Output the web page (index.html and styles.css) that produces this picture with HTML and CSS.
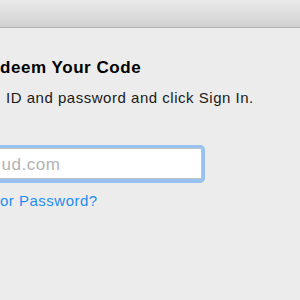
FILE: index.html
```html
<!DOCTYPE html>
<html>
<head>
<meta charset="utf-8">
<link rel="stylesheet" href="styles.css">
</head>
<body>
<div class="toolbar"></div>
<main class="content">
  <h1 class="title">deem Your Code</h1>
  <p class="subtitle">ID and password and click Sign In.</p>
  <div class="ring">
    <input class="field" type="text" placeholder="ud.com">
  </div>
  <a class="link" href="#">or Password?</a>
</main>
</body>
</html>
```
FILE: styles.css
```css
html, body {
  margin: 0;
  padding: 0;
  width: 300px;
  height: 300px;
  overflow: hidden;
  background: #ececec;
  font-family: "Liberation Sans", Arial, sans-serif;
}
.toolbar {
  height: 28px;
  box-sizing: border-box;
  background: linear-gradient(#e9e9e9, #d2d2d2);
  border-bottom: 1px solid #b1b1b1;
}
.content {
  display: flex;
  flex-direction: column;
  align-items: flex-start;
}
.title {
  margin: 30px 0 0 0;
  font-size: 17px;
  line-height: 20px;
  font-weight: bold;
  letter-spacing: 0.55px;
  color: #000;
}
.subtitle {
  margin: 10.5px 0 0 6px;
  font-size: 15px;
  line-height: 18px;
  letter-spacing: 0.52px;
  color: #1a1a1a;
}
.ring {
  margin: 38px 0 0 -10px;
  padding: 3.5px;
  border-radius: 5px;
  background: #96c1f0;
  display: flex;
}
.field {
  box-sizing: border-box;
  width: 208px;
  height: 31px;
  margin: 0;
  padding: 3px 0 0 7px;
  border: 1px solid #c2c2c2;
  border-radius: 0;
  background: #fff;
  font-family: "Liberation Sans", Arial, sans-serif;
  font-size: 17px;
  letter-spacing: 0.55px;
  color: #222;
  outline: none;
}
.field::placeholder {
  color: #b3b3b3;
}
.link {
  margin-top: 9.5px;
  font-size: 15px;
  line-height: 18px;
  letter-spacing: 0.5px;
  color: #1f8cf2;
  text-decoration: none;
}
```
